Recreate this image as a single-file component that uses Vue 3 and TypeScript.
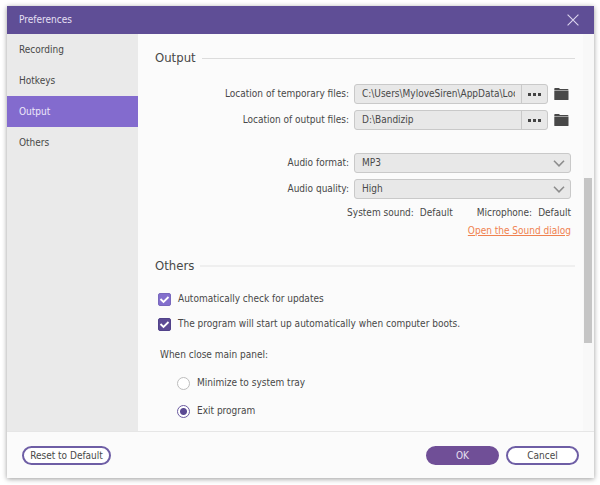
<script setup lang="ts">
import { reactive, ref } from 'vue'

const tabs = ['Recording', 'Hotkeys', 'Output', 'Others']
const activeTab = ref('Output')

const folders = reactive([
  { id: 'temp', label: 'Location of temporary files:', path: 'C:\\Users\\MyloveSiren\\AppData\\Local\\Temp' },
  { id: 'output', label: 'Location of output files:', path: 'D:\\Bandizip' },
])

const audio = reactive([
  { id: 'format', label: 'Audio format:', value: 'MP3', options: ['MP3', 'WMA', 'AAC'] },
  { id: 'quality', label: 'Audio quality:', value: 'High', options: ['Low', 'High'] },
])

const checkUpdates = ref(true)
const startOnBoot = ref(true)
const closeAction = ref('exit')
</script>

<template>
  <div class="desktop">
    <section class="window">
      <header class="titlebar">
        <span>Preferences</span>
        <button class="close" type="button" aria-label="Close">
          <svg width="12" height="12" viewBox="0 0 12 12"><path d="M.6.6l10.8 10.8M11.4.6L.6 11.4" fill="none" stroke="#dcd5ee" stroke-width="1.1" /></svg>
        </button>
      </header>

      <div class="body">
        <nav class="sidebar">
          <button
            v-for="tab in tabs"
            :key="tab"
            type="button"
            class="tab"
            :class="{ active: tab === activeTab }"
            @click="activeTab = tab"
          >{{ tab }}</button>
        </nav>

        <main class="content">
          <h2 class="heading">Output</h2>

          <div class="form">
            <div v-for="f in folders" :key="f.id" class="row">
              <label :for="f.id">{{ f.label }}</label>
              <div class="field">
                <div class="pathbox">
                  <input :id="f.id" v-model="f.path" type="text" />
                  <button type="button" class="browse" aria-label="Browse">
                    <svg width="13" height="3" viewBox="0 0 13 3"><path d="M0 0h3v3H0zM5 0h3v3H5zM10 0h3v3h-3z" fill="#444" /></svg>
                  </button>
                </div>
                <button type="button" class="folder" aria-label="Open folder">
                  <svg width="15" height="12" viewBox="0 0 15 12"><path d="M1 0h4l1 1h7.500q1 0 1 1H.3V.8Q.3 0 1 0zM.3 2.500h14.200v8.900q0 .6-.6.600H.9q-.6 0-.6-.6z" fill="#484848" /></svg>
                </button>
              </div>
            </div>
          </div>

          <div class="form audio">
            <div v-for="a in audio" :key="a.id" class="row">
              <label :for="a.id">{{ a.label }}</label>
              <div class="field selectbox">
                <select :id="a.id" v-model="a.value">
                  <option v-for="o in a.options" :key="o">{{ o }}</option>
                </select>
                <svg class="chevron" width="12" height="7" viewBox="0 0 12 7"><path d="M1 .8l5 5 5-5" fill="none" stroke="#8d8d8d" stroke-width="1.6" /></svg>
              </div>
            </div>
          </div>

          <div class="devices">
            <span class="device"><span>System sound:</span><span>Default</span></span>
            <span class="device"><span>Microphone:</span><span>Default</span></span>
          </div>
          <div class="linkrow"><a href="#">Open the Sound dialog</a></div>

          <h2 class="heading light">Others</h2>

          <div class="checks">
            <label class="option"><input v-model="checkUpdates" class="check" type="checkbox" /><svg class="tick" width="13" height="13" viewBox="0 0 13 13"><path d="M2.5 6l3 3 5-5" fill="none" stroke="#fff" stroke-width="1.8" /></svg>Automatically check for updates</label>
            <label class="option"><input v-model="startOnBoot" class="check dark" type="checkbox" /><svg class="tick" width="13" height="13" viewBox="0 0 13 13"><path d="M2.5 6l3 3 5-5" fill="none" stroke="#fff" stroke-width="1.8" /></svg>The program will start up automatically when computer boots.</label>
          </div>

          <fieldset class="closing">
            <legend>When close main panel:</legend>
            <label class="choice"><input v-model="closeAction" type="radio" name="closing" value="tray" />Minimize to system tray</label>
            <label class="choice"><input v-model="closeAction" type="radio" name="closing" value="exit" />Exit program</label>
          </fieldset>
        </main>

        <div class="scrollbar"><div class="thumb"></div></div>
      </div>

      <footer class="footer">
        <button type="button" class="pill">Reset to Default</button>
        <span class="spacer"></span>
        <button type="button" class="pill small primary">OK</button>
        <button type="button" class="pill small">Cancel</button>
      </footer>
    </section>
  </div>
</template>

<style>
body {
  background: #fff;
}
</style>

<style scoped>
* {
  box-sizing: border-box;
}

.desktop {
  display: flex;
  min-height: 100vh;
  padding: 6px 6px 7px 7px;
  font: 10px/16px "DejaVu Sans Condensed", "Noto Sans", sans-serif;
  color: #484848;
}

button,
input,
select {
  margin: 0;
  padding: 0;
  border: 0;
  background: none;
  font: inherit;
  color: inherit;
}

.window {
  flex: 1;
  min-width: 0;
  display: flex;
  flex-direction: column;
  background: #fbfbfb;
  box-shadow: 0 1px 5px rgba(0, 0, 0, 0.4);
}

.titlebar {
  display: flex;
  align-items: center;
  justify-content: space-between;
  height: 28px;
  padding: 0 15px 0 12px;
  background: #5f4e96;
  color: #e6e0f4;
}

.close {
  display: flex;
}

.body {
  flex: 1;
  display: flex;
}

.sidebar {
  flex: none;
  width: 131px;
  background: #eaeaea;
}

.tab {
  display: block;
  width: 100%;
  height: 31px;
  padding-left: 12px;
  text-align: left;
}

.tab.active {
  background: #836bce;
  color: #eee9fa;
}

.content {
  flex: 1;
  min-width: 0;
  padding: 14px 8px 12px 17px;
}

.heading {
  display: flex;
  align-items: center;
  gap: 6px;
  margin: 0;
  font-size: 13px;
  line-height: 20px;
  font-weight: 400;
}

.heading::after {
  content: "";
  flex: 1;
  height: 1px;
  background: #dcdcdc;
}

.heading.light::after {
  height: 2px;
  background: #efefef;
}

.form {
  display: flex;
  flex-direction: column;
  gap: 6px;
  margin-top: 16px;
  padding-right: 4px;
}

.form.audio {
  margin-top: 23px;
}

.row {
  display: flex;
  align-items: center;
  justify-content: flex-end;
  gap: 5px;
}

.field {
  display: flex;
  align-items: center;
  justify-content: space-between;
  width: 217px;
  height: 20px;
}

.pathbox {
  display: flex;
  width: 194px;
  height: 20px;
  padding-left: 7px;
  border: 1px solid #c9c9c9;
  border-radius: 3px;
  background: #e8e8e8;
}

.pathbox input {
  flex: 1;
  min-width: 0;
  margin-right: 6px;
  outline: 0;
}

.browse {
  display: flex;
  align-items: center;
  justify-content: center;
  width: 26px;
  border-left: 1px solid #c9c9c9;
}

.folder {
  display: flex;
  width: 17px;
}

.selectbox {
  position: relative;
}

.selectbox select {
  width: 100%;
  height: 20px;
  padding-left: 7px;
  border: 1px solid #c9c9c9;
  border-radius: 3px;
  background: #e8e8e8;
  appearance: none;
}

.chevron {
  position: absolute;
  top: 7px;
  right: 6px;
  pointer-events: none;
}

.devices {
  display: flex;
  justify-content: flex-end;
  gap: 24px;
  margin-top: 6px;
  padding-right: 4px;
}

.device {
  display: flex;
  gap: 6px;
}

.linkrow {
  margin-top: 2px;
  padding-right: 4px;
  text-align: right;
}

.linkrow a {
  color: #f0814f;
}

.heading.light {
  margin-top: 17px;
}

.checks {
  display: flex;
  flex-direction: column;
  gap: 9px;
  margin-top: 15px;
  padding-left: 3px;
}

.option {
  position: relative;
  display: flex;
  align-items: center;
  gap: 7px;
}

.check {
  appearance: none;
  width: 13px;
  height: 13px;
  border-radius: 2px;
  border: 1px solid #b5b5b5;
}

.check:checked {
  border-color: #7868bd;
  background: #836fcd;
}

.check.dark:checked {
  border-color: #51428a;
  background: #5c4b94;
}

.tick {
  position: absolute;
  left: 0;
  pointer-events: none;
}

.check:not(:checked) + .tick {
  display: none;
}

.closing {
  margin: 15px 0 0;
  padding: 0 0 0 5px;
  border: 0;
}

.closing legend {
  padding: 0;
}

.choice {
  display: flex;
  align-items: center;
  gap: 7px;
  margin-top: 12px;
  padding-left: 17px;
}

.choice input {
  appearance: none;
  width: 13px;
  height: 13px;
  border: 1px solid #bdbdbd;
  border-radius: 50%;
  background: #fff;
}

.choice input:checked {
  border-color: #6a5a9f;
  background: radial-gradient(circle, #5b4a93 0 3px, #fff 4px);
}

.scrollbar {
  flex: none;
  display: grid;
  grid-template-rows: 144fr 165fr 88fr;
  width: 11px;
  padding: 0 2px 0 1px;
  background: #f8f8f8;
}

.thumb {
  grid-row: 2;
  background: #c5c5c5;
}

.footer {
  display: flex;
  align-items: center;
  gap: 7px;
  height: 47px;
  padding: 0 15px;
  border-top: 1px solid #e6e6e6;
}

.spacer {
  flex: 1;
}

.pill {
  width: 89px;
  height: 19px;
  border: 2px solid #6e5ea5;
  border-radius: 10px;
  background: #fff;
  line-height: 15px;
  white-space: nowrap;
}

.pill.small {
  width: 73px;
}

.pill.primary {
  border-color: #704f97;
  background: #704f97;
  color: #e8e0f2;
}
</style>
